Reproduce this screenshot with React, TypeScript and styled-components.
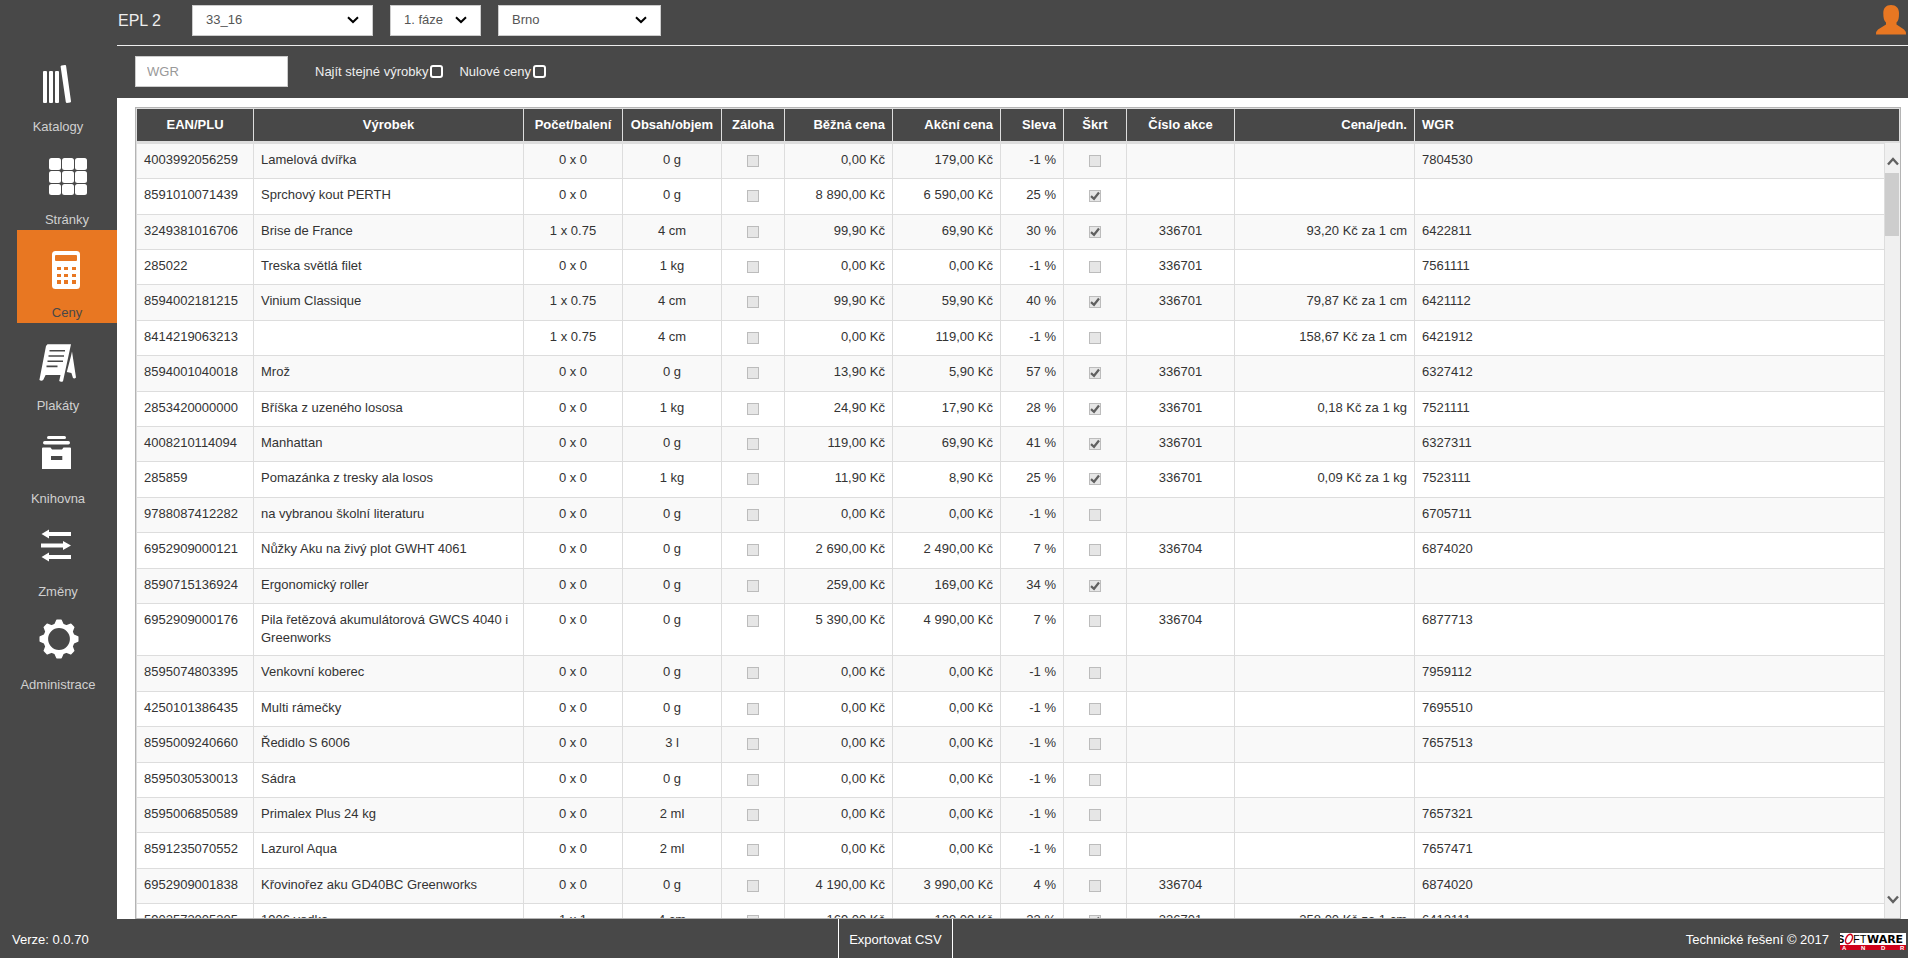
import React, { useRef } from "react";
import styled, { createGlobalStyle, css } from "styled-components";

const dark = "#484848";
const orange = "#e87722";
const line = "#dddddd";

const GlobalStyle = createGlobalStyle`
  *, *::before, *::after { box-sizing: border-box; }
  body {
    margin: 0;
    background: #fff;
    color: #333;
    font: 13px/18px "Liberation Sans", Arial, sans-serif;
  }
  button, input, select { font: inherit; }
`;

const Page = styled.div`
  display: flex;
  flex-direction: column;
  height: 100vh;
  overflow: hidden;
`;

const Middle = styled.div`
  display: flex;
  flex: 1;
  min-height: 0;
`;

const Sidebar = styled.nav`
  flex: none;
  width: 117px;
  padding-top: 44px;
  background: ${dark};
`;

const NavItem = styled.a<{ $indented?: boolean; $active?: boolean }>`
  display: flex;
  flex-direction: column;
  align-items: center;
  justify-content: space-between;
  height: 93px;
  padding: 20px 1px 1px 0;
  color: #d0d0d0;
  text-decoration: none;
  ${(p) => p.$indented && css`
    margin-left: 17px;
    padding-right: 0;
  `}
  ${(p) => p.$active && css`
    background: ${orange};
    color: ${dark};
  `}
`;

const NavIcon = styled.svg`
  width: 40px;
  height: 40px;
  overflow: visible;
  fill: #fff;
`;

const Main = styled.main`
  display: flex;
  flex: 1;
  flex-direction: column;
  min-width: 0;
`;

const TopBar = styled.header`
  display: flex;
  flex: none;
  align-items: center;
  gap: 17px;
  height: 46px;
  padding: 0 2px 5px 1px;
  border-bottom: 1px solid #eee;
  background: ${dark};
`;

const Title = styled.h1`
  width: 57px;
  margin: 0;
  padding-top: 2px;
  color: #eee;
  font-size: 16px;
  font-weight: 400;
`;

const SelectBox = styled.div<{ $width: number }>`
  display: grid;
  align-items: center;
  width: ${(p) => p.$width}px;
  > * { grid-area: 1 / 1; }
  > svg {
    justify-self: end;
    margin-right: 14px;
    pointer-events: none;
  }
`;

const Select = styled.select`
  width: 100%;
  height: 31px;
  padding: 0 30px 0 13px;
  border: 1px solid #ccc;
  border-radius: 0;
  background: #fff;
  color: #555;
  appearance: none;
`;

const UserButton = styled.button`
  display: flex;
  margin-left: auto;
  padding: 0;
  border: 0;
  background: none;
`;

const FilterBar = styled.form`
  display: flex;
  flex: none;
  align-items: center;
  height: 52px;
  padding: 0 18px 1px;
  background: ${dark};
`;

const FilterInput = styled.input`
  width: 153px;
  height: 31px;
  margin-right: 27px;
  padding: 0 11px;
  border: 1px solid #ccc;
  border-radius: 0;
  &::placeholder { color: #999; opacity: 1; }
`;

const FilterLabel = styled.label`
  display: flex;
  align-items: center;
  gap: 2px;
  margin-right: 16px;
  color: #eee;
`;

const FilterCheck = styled.input`
  width: 13px;
  height: 13px;
  margin: 0;
  border: 2px solid #fff;
  border-radius: 3px;
  appearance: none;
  &:checked { background: ${orange}; }
`;

const Frame = styled.section`
  position: relative;
  flex: 1;
  min-height: 0;
  margin: 9px 7px 0 18px;
  border: 1px solid #b4b4b4;
`;

const Scroller = styled.div`
  height: 100%;
  overflow-y: auto;
  scrollbar-width: none;
`;

const Table = styled.table`
  width: 100%;
  border: solid ${line};
  border-width: 0 1px;
  border-collapse: separate;
  border-spacing: 0;
  table-layout: fixed;
`;

type Align = "left" | "center" | "right";

const HeadCell = styled.th<{ $align: Align }>`
  position: sticky;
  top: 0;
  z-index: 1;
  height: 36px;
  padding: 0 7px;
  border: solid ${line};
  border-width: 1px 1px 3px 0;
  background: ${dark};
  color: #fff;
  text-align: ${(p) => p.$align};
  white-space: nowrap;
  &:last-child { border-right: 0; }
`;

const Row = styled.tr`
  height: 35px;
  background: #fff;
  &:nth-child(odd) { background: #f9f9f9; }
  &:nth-child(5n), &:nth-child(5n + 2) { height: 36px; }
`;

const Cell = styled.td<{ $align: Align }>`
  padding: 7px 7px 8px;
  border: solid ${line};
  border-width: 0 1px 1px 0;
  text-align: ${(p) => p.$align};
  vertical-align: top;
`;

const CellCheck = styled.input`
  display: block;
  width: 12px;
  height: 12px;
  margin: 4px auto 0;
  border: 1px solid #bcbcbc;
  background: #e6e6e6;
  appearance: none;
  &:checked {
    background-image: url("data:image/svg+xml,%3Csvg xmlns='http://www.w3.org/2000/svg' viewBox='0 0 10 10'%3E%3Cpath d='M1 5.200 4 7.800 9 1.500' fill='none' stroke='%23606060' stroke-width='2.200'/%3E%3C/svg%3E");
  }
`;

const ScrollBar = styled.div`
  position: absolute;
  top: 35px;
  right: 0;
  bottom: 0;
  z-index: 2;
  display: flex;
  flex-direction: column;
  width: 16px;
  border: solid ${line};
  border-width: 0 0 0 1px;
  background: #f0f0f0;
`;

const ScrollButton = styled.button<{ $down?: boolean }>`
  display: flex;
  justify-content: center;
  align-items: flex-end;
  height: 30px;
  padding: 0 0 7px;
  border: 0;
  background: none;
  ${(p) => p.$down && css`
    align-items: flex-start;
    margin-top: auto;
    padding: 7px 0 0;
  `}
`;

const ScrollThumb = styled.div`
  height: 63px;
  margin-right: 1px;
  background: #cdcdcd;
`;

const Footer = styled.footer`
  display: grid;
  flex: none;
  grid-template-columns: 13fr auto 15fr;
  height: 39px;
  padding: 0 2px 0 12px;
  background: ${dark};
  color: #fff;
  > * { padding-top: 2px; }
`;

const Version = styled.div`
  align-self: center;
`;

const ExportButton = styled.button`
  padding: 2px 10px 0;
  border: solid #fff;
  border-width: 0 1px;
  background: none;
  color: #fff;
`;

const Credit = styled.div`
  display: flex;
  align-items: center;
  justify-content: flex-end;
  gap: 11px;
  > svg { margin-top: 4px; }
`;

const icons: Record<string, React.ReactNode> = {
  catalogs: (
    <>
      <rect x="5" y="7" width="4" height="32" rx="1" />
      <rect x="11" y="7" width="4" height="32" rx="1" />
      <rect x="17" y="7" width="4" height="32" rx="1" />
      <path d="M22.6 2.6Q22.5 1.6 23.5 1.4L27 1Q28 .9 28.1 2L33 37.2Q33.1 38.2 32.2 38.4L29 39Q28 39 27.8 38Z" />
    </>
  ),
  pages: (
    <>
      {[1, 14, 27].map((y) =>
        [2, 15, 28].map((x) => <rect key={`${x}-${y}`} x={x} y={y} width="12" height={y === 27 ? 11 : 12} rx="2.5" />)
      )}
    </>
  ),
  prices: (
    <>
      <rect x="5" y="1" width="28" height="38" rx="3.5" />
      <g fill={orange}>
        <rect x="8" y="5" width="22" height="6" rx="1" />
        {[17, 24, 30].map((y) =>
          [10, 17, 25].map((x) => <rect key={`${x}-${y}`} x={x} y={y} width="4" height={y === 30 ? 4 : 3} />)
        )}
      </g>
    </>
  ),
  posters: (
    <>
      <path d="M9.5 1.3H33L25 38.2Q23 39.4 21.2 38L22.5 32H7.6L5.2 37Q3.5 38.4 1.4 37L8 3Z" />
      <path d="M34 8.5 38 34.5Q36.5 36 35 35L33.4 30 28.8 29 33 13Z" />
      <path d="M11.5 7.8H27M10.5 13H26M9.5 18.2H25M8.5 23.4H19.5" fill="none" stroke={dark} strokeWidth="1.6" />
    </>
  ),
  library: (
    <>
      <rect x="9" y="0" width="19" height="3" rx="1.5" />
      <rect x="5" y="5" width="27" height="3.4" rx="1.7" />
      <path fillRule="evenodd" d="M4 12.5Q4 11.5 5 11.5H12.5L14 13.4H24L25.500 11.500H32Q33 11.500 33 12.500V33H4ZM13 20V24H24.300V20Z" />
    </>
  ),
  changes: (
    <>
      <path d="M3.500 5 11 .5V3H33V7H11V9.500Z" />
      <path d="M33 16.500 25 12V14.500H3V18.500H25V21Z" />
      <path d="M3.500 28 11 23.500V26H33V30H11V32.500Z" />
    </>
  ),
  admin: (
    <g transform="translate(21 17)">
      <circle r="13.300" fill="none" stroke="#fff" strokeWidth="4.800" />
      {[0, 45, 90, 135, 180, 225, 270, 315].map((a) => (
        <path key={a} transform={`rotate(${a})`} d="M-5 -14 -3 -18.500Q-2.800 -19.500 -2 -19.500H2Q2.800 -19.500 3 -18.500L5 -14Z" />
      ))}
    </g>
  ),
};

const nav = [
  { icon: "catalogs", label: "Katalogy" },
  { icon: "pages", label: "Stránky", indented: true },
  { icon: "prices", label: "Ceny", indented: true, active: true },
  { icon: "posters", label: "Plakáty" },
  { icon: "library", label: "Knihovna" },
  { icon: "changes", label: "Změny" },
  { icon: "admin", label: "Administrace" },
];

const columns: { label: string; align: Align; width?: number }[] = [
  { label: "EAN/PLU", align: "center", width: 117 },
  { label: "Výrobek", align: "center", width: 270 },
  { label: "Počet/balení", align: "center", width: 99 },
  { label: "Obsah/objem", align: "center", width: 99 },
  { label: "Záloha", align: "center", width: 63 },
  { label: "Běžná cena", align: "right", width: 108 },
  { label: "Akční cena", align: "right", width: 108 },
  { label: "Sleva", align: "right", width: 63 },
  { label: "Škrt", align: "center", width: 63 },
  { label: "Číslo akce", align: "center", width: 108 },
  { label: "Cena/jedn.", align: "right", width: 180 },
  { label: "WGR", align: "left" },
];

// ean, name, pack, content, price, promo price, discount, struck, promo no., unit price, WGR
type Product = [string, string, string, string, string, string, string, boolean, string, string, string];

const products: Product[] = [
  ["4003992056259", "Lamelová dvířka", "0 x 0", "0 g", "0,00", "179,00", "-1", false, "", "", "7804530"],
  ["8591010071439", "Sprchový kout PERTH", "0 x 0", "0 g", "8 890,00", "6 590,00", "25", true, "", "", ""],
  ["3249381016706", "Brise de France", "1 x 0.75", "4 cm", "99,90", "69,90", "30", true, "336701", "93,20 Kč za 1 cm", "6422811"],
  ["285022", "Treska světlá filet", "0 x 0", "1 kg", "0,00", "0,00", "-1", false, "336701", "", "7561111"],
  ["8594002181215", "Vinium Classique", "1 x 0.75", "4 cm", "99,90", "59,90", "40", true, "336701", "79,87 Kč za 1 cm", "6421112"],
  ["8414219063213", "", "1 x 0.75", "4 cm", "0,00", "119,00", "-1", false, "", "158,67 Kč za 1 cm", "6421912"],
  ["8594001040018", "Mrož", "0 x 0", "0 g", "13,90", "5,90", "57", true, "336701", "", "6327412"],
  ["2853420000000", "Bříška z uzeného lososa", "0 x 0", "1 kg", "24,90", "17,90", "28", true, "336701", "0,18 Kč za 1 kg", "7521111"],
  ["4008210114094", "Manhattan", "0 x 0", "0 g", "119,00", "69,90", "41", true, "336701", "", "6327311"],
  ["285859", "Pomazánka z tresky ala losos", "0 x 0", "1 kg", "11,90", "8,90", "25", true, "336701", "0,09 Kč za 1 kg", "7523111"],
  ["9788087412282", "na vybranou školní literaturu", "0 x 0", "0 g", "0,00", "0,00", "-1", false, "", "", "6705711"],
  ["6952909000121", "Nůžky Aku na živý plot GWHT 4061", "0 x 0", "0 g", "2 690,00", "2 490,00", "7", false, "336704", "", "6874020"],
  ["8590715136924", "Ergonomický roller", "0 x 0", "0 g", "259,00", "169,00", "34", true, "", "", ""],
  ["6952909000176", "Pila řetězová akumulátorová GWCS 4040 i Greenworks", "0 x 0", "0 g", "5 390,00", "4 990,00", "7", false, "336704", "", "6877713"],
  ["8595074803395", "Venkovní koberec", "0 x 0", "0 g", "0,00", "0,00", "-1", false, "", "", "7959112"],
  ["4250101386435", "Multi rámečky", "0 x 0", "0 g", "0,00", "0,00", "-1", false, "", "", "7695510"],
  ["8595009240660", "Ředidlo S 6006", "0 x 0", "3 l", "0,00", "0,00", "-1", false, "", "", "7657513"],
  ["8595030530013", "Sádra", "0 x 0", "0 g", "0,00", "0,00", "-1", false, "", "", ""],
  ["8595006850589", "Primalex Plus 24 kg", "0 x 0", "2 ml", "0,00", "0,00", "-1", false, "", "", "7657321"],
  ["8591235070552", "Lazurol Aqua", "0 x 0", "2 ml", "0,00", "0,00", "-1", false, "", "", "7657471"],
  ["6952909001838", "Křovinořez aku GD40BC Greenworks", "0 x 0", "0 g", "4 190,00", "3 990,00", "4", false, "336704", "", "6874020"],
  ["5902573005305", "1906 vodka", "1 x 1", "4 cm", "169,00", "129,00", "23", true, "336701", "258,00 Kč za 1 cm", "6412111"],
];

function Picker({ label, value, width }: { label: string; value: string; width: number }) {
  return (
    <SelectBox $width={width}>
      <Select aria-label={label} defaultValue={value}>
        <option>{value}</option>
      </Select>
      <svg width="12" height="8" viewBox="0 0 12 8" aria-hidden="true">
        <path d="M1 1.200 6 6 11 1.200" fill="none" stroke="#000" strokeWidth="2" />
      </svg>
    </SelectBox>
  );
}

function ProductRow({ product }: { product: Product }) {
  const [ean, name, pack, content, price, promo, discount, struck, promoNo, unit, wgr] = product;
  return (
    <Row>
      <Cell $align="left">{ean}</Cell>
      <Cell $align="left">{name}</Cell>
      <Cell $align="center">{pack}</Cell>
      <Cell $align="center">{content}</Cell>
      <Cell $align="center"><CellCheck type="checkbox" disabled aria-label="Záloha" /></Cell>
      <Cell $align="right">{price} Kč</Cell>
      <Cell $align="right">{promo} Kč</Cell>
      <Cell $align="right">{discount} %</Cell>
      <Cell $align="center"><CellCheck type="checkbox" disabled defaultChecked={struck} aria-label="Škrt" /></Cell>
      <Cell $align="center">{promoNo}</Cell>
      <Cell $align="right">{unit}</Cell>
      <Cell $align="left">{wgr}</Cell>
    </Row>
  );
}

export default function App() {
  const scroller = useRef<HTMLDivElement>(null);
  const scroll = (top: number) => scroller.current?.scrollBy({ top });

  return (
    <Page>
      <GlobalStyle />
      <Middle>
        <Sidebar>
          {nav.map((n) => (
            <NavItem key={n.icon} href="#" $indented={n.indented} $active={n.active}>
              <NavIcon viewBox="0 0 40 40" aria-hidden="true">{icons[n.icon]}</NavIcon>
              {n.label}
            </NavItem>
          ))}
        </Sidebar>
        <Main>
          <TopBar>
            <Title>EPL 2</Title>
            <Picker label="Katalog" value="33_16" width={181} />
            <Picker label="Fáze" value="1. fáze" width={91} />
            <Picker label="Město" value="Brno" width={163} />
            <UserButton aria-label="Uživatel">
              <svg width="30" height="30" viewBox="0 0 30 30" fill={orange}>
                <path d="M15 0C20 0 23 3 23 8C23 13 22.500 16 20.500 17.500V19.500L28 24.500Q30 26 30 29.500H0Q0 26 2 24.500L10 19.500V17.500C8 16 7.300 13 7.300 8C7.300 3 10 0 15 0Z" />
              </svg>
            </UserButton>
          </TopBar>
          <FilterBar>
            <FilterInput placeholder="WGR" aria-label="WGR" />
            <FilterLabel>Najít stejné výrobky<FilterCheck type="checkbox" /></FilterLabel>
            <FilterLabel>Nulové ceny<FilterCheck type="checkbox" /></FilterLabel>
          </FilterBar>
          <Frame>
            <Scroller ref={scroller}>
              <Table>
                <colgroup>
                  {columns.map((c) => <col key={c.label} width={c.width} />)}
                </colgroup>
                <thead>
                  <tr>
                    {columns.map((c) => <HeadCell key={c.label} $align={c.align} scope="col">{c.label}</HeadCell>)}
                  </tr>
                </thead>
                <tbody>
                  {products.map((p) => <ProductRow key={p[0]} product={p} />)}
                </tbody>
              </Table>
            </Scroller>
            <ScrollBar>
              <ScrollButton aria-label="Nahoru" onClick={() => scroll(-71)}>
                <svg width="12" height="9" viewBox="0 0 12 9"><path d="M1 7.500 6 2 11 7.500" fill="none" stroke="#606060" strokeWidth="2.400" /></svg>
              </ScrollButton>
              <ScrollThumb />
              <ScrollButton $down aria-label="Dolů" onClick={() => scroll(71)}>
                <svg width="12" height="9" viewBox="0 0 12 9"><path d="M1 1.500 6 7 11 1.500" fill="none" stroke="#606060" strokeWidth="2.400" /></svg>
              </ScrollButton>
            </ScrollBar>
          </Frame>
        </Main>
      </Middle>
      <Footer>
        <Version>Verze: 0.0.70</Version>
        <ExportButton>Exportovat CSV</ExportButton>
        <Credit>
          Technické řešení © 2017
          <svg width="66" height="17" viewBox="0 0 66 17" role="img" aria-label="Software Andr">
            <rect width="66" height="12" fill="#fff" />
            <rect y="12" width="66" height="5" fill="#d0021b" />
            <text x="-3" y="10" fontSize="11" fontWeight="700">S</text>
            <ellipse cx="9" cy="6" rx="3" ry="5" transform="rotate(25 9 6)" fill="none" stroke="#d0021b" strokeWidth="1.500" />
            <text x="13" y="10" fontSize="11">FT</text>
            <text x="27" y="10" fontFamily="DejaVu Sans, sans-serif" fontSize="11" fontWeight="700">WARE</text>
            <g fill="#fff" fontSize="6" fontWeight="700">
              <text x="2" y="17">A</text>
              <text x="21" y="17">N</text>
              <text x="41" y="17">D</text>
              <text x="60" y="17">R</text>
            </g>
          </svg>
        </Credit>
      </Footer>
    </Page>
  );
}
